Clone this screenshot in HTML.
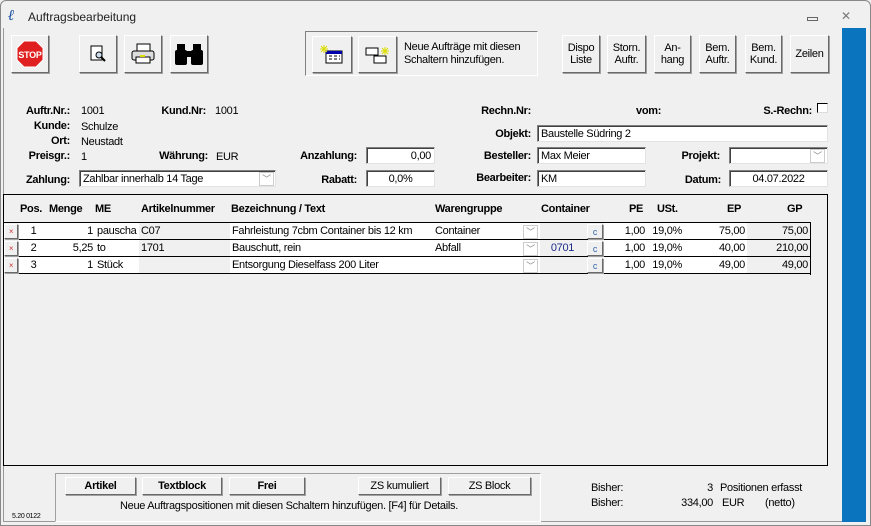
<!DOCTYPE html>
<html><head><meta charset="utf-8"><style>
*{box-sizing:border-box;margin:0;padding:0}
body{width:871px;height:526px;background:#f0f0f0;font-family:"Liberation Sans",sans-serif;font-size:11px;color:#000;position:relative;overflow:hidden;letter-spacing:-0.3px}
.a{position:absolute;white-space:nowrap}
.t{margin-top:2px}
.b{font-weight:bold}
.r{text-align:right}
.btn{position:absolute;background:#f0f0f0;border:1px solid;border-color:#fff #696969 #696969 #fff;box-shadow:1px 1px 0 #a0a0a0;display:flex;align-items:center;justify-content:center;text-align:center;line-height:12px}
.in{position:absolute;background:#fff;border:1px solid;border-color:#808080 #e3e3e3 #e3e3e3 #808080;box-shadow:inset 1px 1px 0 #404040;padding:2px 3px 0;line-height:13px}
.dd{position:absolute;width:15px;height:14px;border:1px solid #ccc;background:#fff;color:#888;font-size:9px;text-align:center;line-height:12px}
.cell{position:absolute;border-right:1px solid #000;border-bottom:1px solid #000;height:17px;line-height:17px;padding:0 2px;overflow:hidden;white-space:nowrap;background:#fff}
</style></head><body>
<div class="a" style="left:0;top:0;width:871px;height:526px;border:1px solid #888;border-radius:6px 6px 0 0"></div>
<div class="a" style="left:8px;top:8px;color:#1a4fa0;font-style:italic;font-weight:bold;font-size:15px;font-family:'Liberation Serif',serif">ℓ</div>
<div class="a" style="left:28px;top:10px;font-size:12px;color:#222;letter-spacing:0">Auftragsbearbeitung</div>
<div class="a" style="left:807px;top:17px;width:11px;height:4px;border:1px solid #666"></div>
<div class="a" style="left:841px;top:9px;font-size:12px;color:#777">✕</div>
<div class="a" style="left:842px;top:28px;width:24px;height:494px;background:#0a74be"></div>
<div class="a" style="left:3px;top:28px;width:1px;height:494px;background:#999"></div>
<div class="a" style="left:3px;top:521px;width:839px;height:1px;background:#999"></div>

<div class="btn" style="left:11px;top:35px;width:38px;height:38px"><svg width="28" height="28" viewBox="0 0 28 28"><polygon points="8,1 20,1 27,8 27,20 20,27 8,27 1,20 1,8" fill="#e02020" stroke="#fff" stroke-width="1"/><text x="14" y="18" font-size="9" font-weight="bold" fill="#fff" text-anchor="middle" font-family="Liberation Sans">STOP</text></svg></div>
<div class="btn" style="left:79px;top:35px;width:38px;height:38px"><svg width="18" height="18"><rect x="2" y="1" width="11" height="14" fill="#fff" stroke="#000"/><circle cx="10" cy="10" r="3" fill="#cde" stroke="#000"/><line x1="12" y1="12" x2="16" y2="16" stroke="#000" stroke-width="2"/></svg></div>
<div class="btn" style="left:124px;top:35px;width:38px;height:38px"><svg width="26" height="22"><rect x="7" y="1" width="13" height="7" fill="#fff" stroke="#000"/><rect x="2" y="8" width="22" height="9" rx="2" fill="#ddd" stroke="#000"/><rect x="6" y="14" width="14" height="6" fill="#fff" stroke="#000"/><rect x="10" y="12" width="5" height="2" fill="#dd0"/></svg></div>
<div class="btn" style="left:170px;top:35px;width:38px;height:38px"><svg width="30" height="24"><rect x="3" y="2" width="8" height="6" fill="#000"/><rect x="19" y="2" width="8" height="6" fill="#000"/><rect x="1" y="8" width="12" height="15" rx="2" fill="#000"/><rect x="17" y="8" width="12" height="15" rx="2" fill="#000"/><rect x="12" y="9" width="6" height="6" fill="#000"/></svg></div>

<div class="a" style="left:305px;top:31px;width:233px;height:45px;border:1px solid;border-color:#808080 #fff #fff #808080"></div>
<div class="btn" style="left:312px;top:36px;width:40px;height:37px"><svg width="24" height="20"><rect x="6" y="6" width="16" height="12" fill="#fff" stroke="#000"/><rect x="6" y="6" width="16" height="3" fill="#00a"/><path d="M9 11h3M14 11h3M9 14h3M14 14h3M19 11h1M19 14h1" stroke="#000"/><path d="M4 0v8M0 4h8M1 1l6 6M7 1l-6 6" stroke="#dd0"/></svg></div>
<div class="btn" style="left:358px;top:36px;width:39px;height:37px"><svg width="26" height="20"><rect x="1" y="3" width="12" height="7" fill="#fff" stroke="#000"/><rect x="9" y="11" width="12" height="7" fill="#fff" stroke="#000"/><path d="M20 2v8M16 6h8M17 3l6 6M23 3l-6 6" stroke="#dd0"/></svg></div>
<div class="a" style="left:404px;top:41px;line-height:13px">Neue Aufträge mit diesen<br>Schaltern hinzufügen.</div>

<div class="btn" style="left:562px;top:35px;width:38px;height:38px">Dispo<br>Liste</div>
<div class="btn" style="left:607px;top:35px;width:39px;height:38px">Storn.<br>Auftr.</div>
<div class="btn" style="left:654px;top:35px;width:37px;height:38px">An-<br>hang</div>
<div class="btn" style="left:699px;top:35px;width:37px;height:38px">Bem.<br>Auftr.</div>
<div class="btn" style="left:745px;top:35px;width:37px;height:38px">Bem.<br>Kund.</div>
<div class="btn" style="left:790px;top:35px;width:39px;height:38px">Zeilen</div>

<div class="a b r t" style="left:0;width:70px;top:103px">Auftr.Nr.:</div><div class="a t" style="left:81px;top:103px">1001</div>
<div class="a b r t" style="left:120px;width:86px;top:103px">Kund.Nr:</div><div class="a t" style="left:215px;top:103px">1001</div>
<div class="a b r t" style="left:0;width:70px;top:118px">Kunde:</div><div class="a t" style="left:81px;top:119px">Schulze</div>
<div class="a b r t" style="left:0;width:70px;top:133px">Ort:</div><div class="a t" style="left:81px;top:134px">Neustadt</div>
<div class="a b r t" style="left:0;width:70px;top:148px">Preisgr.:</div><div class="a t" style="left:81px;top:149px">1</div>
<div class="a b r t" style="left:120px;width:88px;top:148px">Währung:</div><div class="a t" style="left:216px;top:149px">EUR</div>
<div class="a b r t" style="left:0;width:70px;top:172px">Zahlung:</div>
<div class="in" style="left:79px;top:170px;width:197px;height:17px">Zahlbar innerhalb 14 Tage</div><div class="dd" style="left:259px;top:172px">﹀</div>
<div class="a b r t" style="left:260px;width:97px;top:148px">Anzahlung:</div><div class="in r" style="left:366px;top:147px;width:69px;height:17px">0,00</div>
<div class="a b r t" style="left:260px;width:97px;top:172px">Rabatt:</div><div class="in" style="left:366px;top:170px;width:69px;height:17px;text-align:center">0,0%</div>

<div class="a b r t" style="left:440px;width:91px;top:103px">Rechn.Nr:</div>
<div class="a b t" style="left:636px;top:103px">vom:</div>
<div class="a b r t" style="left:720px;width:92px;top:103px">S.-Rechn:</div>
<div class="a" style="left:817px;top:103px;width:11px;height:10px;border:1px solid;border-color:#000 #ddd #ddd #000;background:#fff"></div>
<div class="a b r t" style="left:440px;width:91px;top:126px">Objekt:</div><div class="in" style="left:537px;top:125px;width:291px;height:17px">Baustelle Südring 2</div>
<div class="a b r t" style="left:440px;width:91px;top:148px">Besteller:</div><div class="in" style="left:537px;top:147px;width:109px;height:17px">Max Meier</div>
<div class="a b r t" style="left:620px;width:100px;top:148px">Projekt:</div><div class="in" style="left:729px;top:147px;width:99px;height:17px"></div><div class="dd" style="left:810px;top:149px">﹀</div>
<div class="a b r t" style="left:440px;width:91px;top:170px">Bearbeiter:</div><div class="in" style="left:537px;top:170px;width:109px;height:17px">KM</div>
<div class="a b r t" style="left:620px;width:101px;top:172px">Datum:</div><div class="in" style="left:729px;top:170px;width:99px;height:17px;text-align:center">04.07.2022</div>

<div class="a" style="left:3px;top:194px;width:825px;height:272px;border:1px solid #000;background:#f0f0f0"></div>
<div class="a b t" style="left:20px;top:201px">Pos.</div><div class="a b t" style="left:49px;top:201px">Menge</div><div class="a b t" style="left:95px;top:201px">ME</div>
<div class="a b t" style="left:141px;top:201px">Artikelnummer</div><div class="a b t" style="left:231px;top:201px">Bezeichnung / Text</div>
<div class="a b t" style="left:435px;top:201px">Warengruppe</div><div class="a b t" style="left:541px;top:201px">Container</div>
<div class="a b t" style="left:629px;top:201px">PE</div><div class="a b t" style="left:657px;top:201px">USt.</div><div class="a b t" style="left:727px;top:201px">EP</div><div class="a b t" style="left:787px;top:201px">GP</div>
<div class="a" style="left:4px;top:222px;width:806px;height:1px;background:#000"></div>
<div class="a" style="left:810px;top:222px;width:1px;height:53px;background:#000"></div>

<div id="rows"></div>
<script>
var rows=[["1","1","pauscha","C07","Fahrleistung 7cbm Container bis 12 km","Container","","75,00","75,00"],
["2","5,25","to","1701","Bauschutt, rein","Abfall","0701","40,00","210,00"],
["3","1","Stück","","Entsorgung Dieselfass 200 Liter","","","49,00","49,00"]];
var h="";
rows.forEach(function(r,i){var y=223+i*17;
function c(x,w,t,st){h+='<div class="cell" style="left:'+x+'px;top:'+y+'px;width:'+w+'px;'+(st||'')+'">'+t+'</div>';}
h+='<div class="btn" style="left:4px;top:'+(y+1)+'px;width:14px;height:15px;color:#c33;font-size:8px">×</div>';
c(19,30,r[0],'text-align:center');c(48,48,r[1],'text-align:right');c(95,45,r[2]);c(139,92,r[3],'background:#f0f0f0');
c(230,204,r[4]);c(433,108,r[5]);c(540,46,r[6],'background:#f0f0f0;color:#1a2a8a;text-align:center');
h+='<div class="dd" style="left:523px;top:'+(y+2)+'px">﹀</div>';
c(585,20,'','background:#f0f0f0');
h+='<div class="btn" style="left:587px;top:'+(y+1)+'px;width:16px;height:15px;color:#36a;font-size:9px">c</div>';
c(604,44,'1,00','text-align:right');c(647,38,'19,0%','text-align:right');c(684,64,r[7],'text-align:right');c(747,64,r[8],'text-align:right;background:#f0f0f0');
});
document.getElementById('rows').innerHTML=h;
</script>

<div class="a" style="left:55px;top:473px;width:486px;height:49px;border:1px solid;border-color:#a0a0a0 #fff #fff #a0a0a0"></div>
<div class="btn b" style="left:65px;top:477px;width:71px;height:18px">Artikel</div>
<div class="btn b" style="left:142px;top:477px;width:80px;height:18px">Textblock</div>
<div class="btn b" style="left:229px;top:477px;width:76px;height:18px">Frei</div>
<div class="btn" style="left:358px;top:477px;width:83px;height:18px">ZS kumuliert</div>
<div class="btn" style="left:448px;top:477px;width:83px;height:18px">ZS Block</div>
<div class="a t" style="left:120px;top:498px">Neue Auftragspositionen mit diesen Schaltern hinzufügen. [F4] für Details.</div>
<div class="a" style="left:12px;top:513px;font-size:7px">5.20 0122</div>
<div class="a t" style="left:591px;top:480px">Bisher:</div><div class="a r t" style="left:680px;width:33px;top:480px">3</div><div class="a t" style="left:720px;top:480px">Positionen erfasst</div>
<div class="a t" style="left:591px;top:495px">Bisher:</div><div class="a r t" style="left:650px;width:63px;top:495px">334,00</div><div class="a t" style="left:722px;top:495px">EUR</div><div class="a t" style="left:765px;top:495px">(netto)</div>
</body></html>
